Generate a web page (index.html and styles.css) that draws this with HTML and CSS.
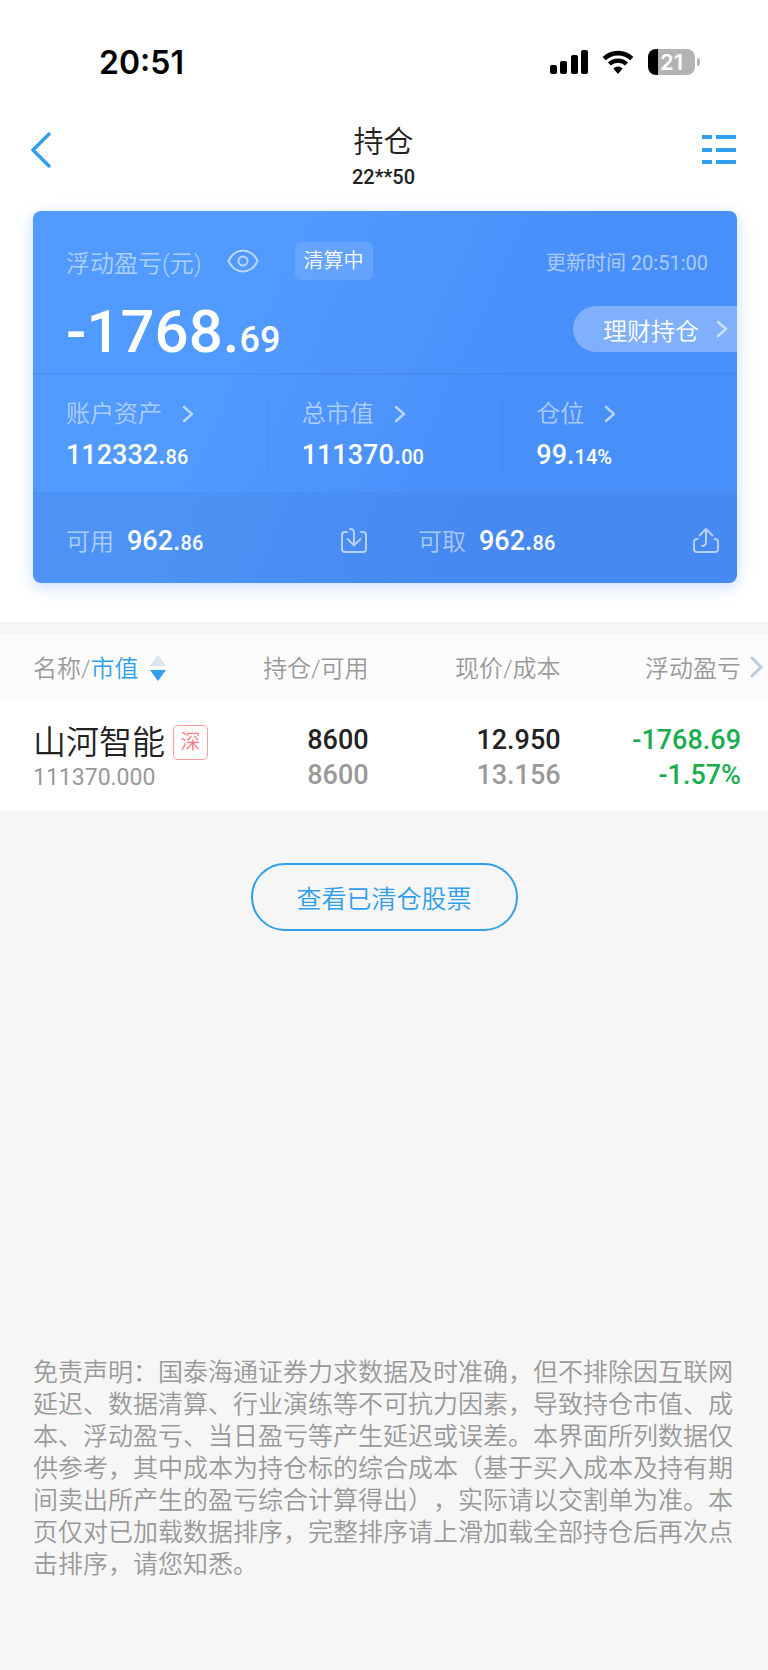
FILE: index.html
```html
<!DOCTYPE html>
<html lang="zh-CN">
<head>
    <meta charset="UTF-8">
    <meta name="viewport" content="width=device-width, initial-scale=1.0">
    <title>持仓</title>
    <link rel="stylesheet" href="styles.css">
</head>
<body>

    <div class="top">
        <div class="status-bar">
            <span class="time">20:51</span>
            <div class="status-icons">
                <svg width="38" height="24" viewBox="0 0 38 24">
                    <rect x="0" y="15" width="7" height="9" rx="2"/>
                    <rect x="10" y="11" width="7" height="13" rx="2"/>
                    <rect x="21" y="5" width="7" height="19" rx="2"/>
                    <rect x="31" y="0" width="7" height="24" rx="2"/>
                </svg>
                <svg width="32" height="24" viewBox="0 0 32 24">
                    <path d="M2.2 8.6a20 20 0 0 1 27.6 0" fill="none" stroke="#000" stroke-width="4.6"/>
                    <path d="M7.4 14a12.4 12.4 0 0 1 17.2 0" fill="none" stroke="#000" stroke-width="4.2"/>
                    <path d="M11.4 18.4a6.6 6.6 0 0 1 9.2 0L16 24z"/>
                </svg>
                <div class="battery"><span>21</span></div>
            </div>
        </div>

        <header class="nav">
            <button class="icon-btn" aria-label="返回">
                <svg width="20" height="36" viewBox="0 0 20 36">
                    <path d="M18 2L2 18L18 34" fill="none" stroke="#2f9fee" stroke-width="3.500" stroke-linecap="round" stroke-linejoin="round"/>
                </svg>
            </button>
            <div class="nav-title">
                <h1>持仓</h1>
                <p>22**50</p>
            </div>
            <button class="icon-btn" aria-label="菜单">
                <svg width="34" height="30" viewBox="0 0 34 30" fill="#2f9fee">
                    <rect x="0" y="0" width="10" height="4"/><rect x="14" y="0" width="20" height="4"/>
                    <rect x="0" y="13" width="10" height="4"/><rect x="14" y="13" width="20" height="4"/>
                    <rect x="0" y="25" width="10" height="4"/><rect x="14" y="25" width="20" height="4"/>
                </svg>
            </button>
        </header>

        <section class="card">
            <div class="summary">
                <div class="summary-head">
                    <span class="label">浮动盈亏(元)</span>
                    <button class="icon-btn eye" aria-label="隐藏金额">
                        <svg width="32" height="24" viewBox="0 0 32 24" fill="none" stroke="#fff" stroke-width="2">
                            <path d="M1.5 12C4 6 9.500 1.500 16 1.500S28 6 30.500 12C28 18 22.500 22.500 16 22.500S4 18 1.500 12z"/>
                            <circle cx="16" cy="12" r="4.500"/>
                        </svg>
                    </button>
                    <span class="badge">清算中</span>
                    <span class="update">更新时间 20:51:00</span>
                </div>
                <div class="summary-main">
                    <div class="profit">-1768.<small>69</small></div>
                    <a href="#" class="pill">理财持仓
                        <svg width="12" height="18" viewBox="0 0 12 18"><path class="chevron" d="M2 2L10 9L2 16"/></svg>
                    </a>
                </div>
            </div>

            <div class="stats">
                <a href="#" class="stat">
                    <span class="label">账户资产 <svg width="12" height="18" viewBox="0 0 12 18"><path class="chevron" d="M2 2L10 9L2 16"/></svg></span>
                    <span class="num">112332.<small>86</small></span>
                </a>
                <a href="#" class="stat">
                    <span class="label">总市值 <svg width="12" height="18" viewBox="0 0 12 18"><path class="chevron" d="M2 2L10 9L2 16"/></svg></span>
                    <span class="num">111370.<small>00</small></span>
                </a>
                <a href="#" class="stat">
                    <span class="label">仓位 <svg width="12" height="18" viewBox="0 0 12 18"><path class="chevron" d="M2 2L10 9L2 16"/></svg></span>
                    <span class="num">99.<small>14%</small></span>
                </a>
            </div>

            <div class="funds">
                <div class="fund">
                    <div><span class="label">可用</span><span class="num">962.<small>86</small></span></div>
                    <button class="icon-btn" aria-label="转入">
                        <svg width="26" height="26" viewBox="0 0 26 26" class="line-icon">
                            <path d="M6 5H4a3 3 0 0 0-3 3v14a3 3 0 0 0 3 3h18a3 3 0 0 0 3-3V8a3 3 0 0 0-3-3h-2"/>
                            <path d="M9 2c3 0 4 1 4 4v12M6.500 12L13 18.500L19.500 12"/>
                        </svg>
                    </button>
                </div>
                <div class="fund">
                    <div><span class="label">可取</span><span class="num">962.<small>86</small></span></div>
                    <button class="icon-btn" aria-label="转出">
                        <svg width="26" height="26" viewBox="0 0 26 26" class="line-icon">
                            <path d="M4.500 12H4a3 3 0 0 0-3 3v7a3 3 0 0 0 3 3h18a3 3 0 0 0 3-3v-7a3 3 0 0 0-3-3h-.500"/>
                            <path d="M9 19c3 0 4-1 4-4V2M6.500 8.500L13 2L19.500 8.500"/>
                        </svg>
                    </button>
                </div>
            </div>
        </section>
    </div>

    <table class="holdings">
        <thead>
            <tr>
                <th class="col-name">名称/<span class="active">市值</span>
                    <svg width="16" height="26" viewBox="0 0 16 26">
                        <path d="M8 0L16 11H0z" fill="#dbe3ec"/>
                        <path d="M0 15H16L8 26z" fill="#2f9fee"/>
                    </svg>
                </th>
                <th class="col-hold">持仓/可用</th>
                <th class="col-price">现价/成本</th>
                <th>浮动盈亏</th>
                <th class="col-more">
                    <button class="icon-btn" aria-label="更多">
                        <svg width="14" height="22" viewBox="0 0 14 22"><path d="M2 2L11 11L2 20" fill="none" stroke="#bccadb" stroke-width="3" stroke-linecap="round"/></svg>
                    </button>
                </th>
            </tr>
        </thead>
        <tbody>
            <tr>
                <td class="col-name">
                    <div class="stock">山河智能<span class="tag">深</span></div>
                    <div class="value">111370.000</div>
                </td>
                <td><div>8600</div><div class="gray">8600</div></td>
                <td><div>12.950</div><div class="gray">13.156</div></td>
                <td class="green"><div>-1768.69</div><div>-1.57%</div></td>
                <td></td>
            </tr>
        </tbody>
    </table>

    <button class="cleared">查看已清仓股票</button>

    <p class="disclaimer">免责声明：国泰海通证券力求数据及时准确，但不排除因互联网延迟、数据清算、行业演练等不可抗力因素，导致持仓市值、成本、浮动盈亏、当日盈亏等产生延迟或误差。本界面所列数据仅供参考，其中成本为持仓标的综合成本（基于买入成本及持有期间卖出所产生的盈亏综合计算得出），实际请以交割单为准。本页仅对已加载数据排序，完整排序请上滑加载全部持仓后再次点击排序，请您知悉。</p>

</body>
</html>
```
FILE: styles.css
```css
* {
    box-sizing: border-box;
}
body {
    margin: 0;
    background-color: #f6f6f6;
    color: #222;
    font-family: Roboto, "Noto Sans CJK SC", sans-serif;
    font-size: 25px;
    font-weight: 350;
}
h1, p {
    margin: 0;
}
a {
    color: inherit;
    text-decoration: none;
}
svg {
    display: block;
    flex: none;
}
button {
    font: inherit;
    cursor: pointer;
}
.icon-btn {
    display: block;
    padding: 0;
    border: 0;
    background: none;
}

/* top */
.top {
    padding-bottom: 39px;
    background-color: #fff;
}
.status-bar {
    display: flex;
    justify-content: space-between;
    align-items: center;
    height: 124px;
    padding: 0 67px 0 99px;
}
.time {
    color: #000;
    font-family: Inter, sans-serif;
    font-size: 32px;
    font-weight: 600;
}
.status-icons {
    display: flex;
    align-items: center;
    gap: 14px;
}
.battery {
    position: relative;
    width: 47px;
    height: 26px;
    margin-right: 6px;
    border-radius: 8px;
    background: linear-gradient(to right, #000 10px, #b3b3b3 10px);
    color: #fff;
    font: 600 22px/26px Inter, sans-serif;
    text-align: center;
}
.battery::after {
    content: "";
    position: absolute;
    top: 9px;
    right: -5px;
    width: 3px;
    height: 8px;
    border-radius: 0 4px 4px 0;
    background-color: #b3b3b3;
}
.nav {
    display: flex;
    justify-content: space-between;
    align-items: flex-start;
    height: 87px;
    padding: 0 32px 0 31px;
}
.nav .icon-btn {
    display: flex;
    align-items: center;
    width: 34px;
    height: 52px;
}
.nav-title {
    text-align: center;
}
.nav-title h1 {
    font-size: 30px;
    font-weight: 350;
    line-height: 35px;
}
.nav-title p {
    font-size: 20px;
    font-weight: 500;
    line-height: 36px;
}

/* blue card */
.card {
    margin: 0 31px 0 33px;
    overflow: hidden;
    border-radius: 8px;
    background: linear-gradient(115deg, #519aff 30%, #498ffa 65%);
    box-shadow: 0 4px 16px rgba(73, 143, 250, 0.3);
    color: #fff;
}
.label {
    color: rgba(255, 255, 255, 0.55);
    font-size: 24px;
}
.chevron {
    fill: none;
    stroke: #fff;
    stroke-width: 2.5;
    stroke-linecap: round;
    stroke-linejoin: round;
    opacity: 0.6;
}
.summary {
    height: 164px;
    padding: 31px 0 0 33px;
    border-bottom: 2px solid rgba(0, 0, 0, 0.04);
}
.summary-head {
    display: flex;
    align-items: center;
    padding-right: 29px;
}
.eye {
    margin: 0 36px 0 25px;
    opacity: 0.6;
}
.badge {
    padding: 0 9px;
    border-radius: 6px;
    background-color: rgba(255, 255, 255, 0.12);
    font-size: 20px;
    line-height: 38px;
}
.update {
    margin-left: auto;
    color: rgba(255, 255, 255, 0.55);
    font-size: 20px;
    font-weight: 400;
}
.summary-main {
    display: flex;
    justify-content: space-between;
    align-items: center;
    height: 98px;
}
.profit {
    padding-top: 14px;
    font-size: 60px;
    font-weight: 500;
    line-height: 72px;
}
.profit small {
    font-size: 36px;
}
.pill {
    display: flex;
    align-items: center;
    gap: 17px;
    height: 46px;
    padding: 0 9px 0 30px;
    border-radius: 23px 0 0 23px;
    background-color: rgba(255, 255, 255, 0.3);
    font-size: 24px;
}
.stats {
    display: grid;
    grid-template-columns: repeat(3, 1fr);
    padding: 24px 0;
}
.stat {
    height: 69px;
    padding-left: 33px;
}
.stat + .stat {
    border-left: 1px dashed rgba(0, 0, 0, 0.1);
}
.stat .label {
    display: flex;
    align-items: center;
    gap: 20px;
    line-height: 30px;
}
.stat .num {
    display: block;
    line-height: 52px;
}
.num {
    font-size: 27px;
    font-weight: 500;
}
.num small {
    font-size: 20px;
}
.funds {
    display: grid;
    grid-template-columns: 1fr 1fr;
    background-color: rgba(0, 0, 0, 0.04);
}
.fund {
    display: flex;
    justify-content: space-between;
    align-items: center;
    height: 91px;
    padding: 4px 18px 0 33px;
}
.fund .num {
    margin-left: 13px;
}
.line-icon {
    fill: none;
    stroke: #fff;
    stroke-width: 2;
    stroke-linecap: round;
    stroke-linejoin: round;
    opacity: 0.6;
}

/* holdings */
.holdings {
    width: 100%;
    margin-top: 13px;
    border-collapse: collapse;
    table-layout: fixed;
    background-color: #fff;
    text-align: right;
}
.holdings th, .holdings td {
    padding: 0;
}
.holdings th {
    height: 63px;
    background-color: #fcfcfc;
    color: #999;
    font-size: 24px;
    font-weight: 350;
    text-align: right;
}
.holdings .col-name {
    width: 30%;
    padding-left: 33px;
    text-align: left;
    white-space: nowrap;
}
.holdings .col-hold {
    width: 18%;
}
.holdings .col-price {
    width: 25%;
}
.holdings .col-more {
    width: 27px;
    padding-left: 9px;
}
.col-name svg {
    display: inline-block;
    margin: -6px 0 0 6px;
    vertical-align: middle;
}
.active {
    color: #2f9fee;
}
.holdings td {
    height: 113px;
    padding-top: 6px;
    font-size: 27px;
    font-weight: 500;
    line-height: 35px;
}
.holdings td.col-name {
    padding-top: 10px;
}
.stock {
    display: flex;
    align-items: center;
    gap: 8px;
    font-size: 33px;
    font-weight: 350;
}
.tag {
    width: 35px;
    height: 35px;
    border: 1px solid #ff9a9f;
    border-radius: 5px;
    color: #ff7b82;
    font-size: 20px;
    line-height: 33px;
    text-align: center;
}
.value {
    color: #999;
    font-size: 23px;
    font-weight: 400;
}
.gray {
    color: #999;
}
.green {
    color: #1aad4f;
}

.cleared {
    display: block;
    width: 267px;
    height: 68px;
    margin: 52px auto 0;
    border: 2px solid #2f9fee;
    border-radius: 34px;
    background: none;
    color: #2f9fee;
}
.disclaimer {
    margin: 426px 33px 0;
    padding-bottom: 89px;
    color: #999;
    line-height: 32px;
    text-spacing-trim: space-all;
}
```
